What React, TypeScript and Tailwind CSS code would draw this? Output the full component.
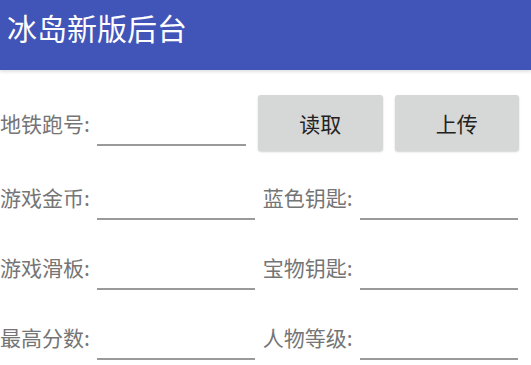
import React from "react";

const font = { fontFamily: '"Noto Sans CJK SC", "Noto Sans", sans-serif' };

function Field({ label, width, className = "" }: { label: string; width: string; className?: string }) {
  return (
    <div className={`flex items-center ${className}`}>
      <span className="text-[21px] leading-none text-[#757575] whitespace-nowrap">{label}</span>
      <div className={`ml-[7px] h-[46px] border-b-2 border-[#9a9a9a] ${width}`} />
    </div>
  );
}

function Button({ label, width }: { label: string; width: string }) {
  return (
    <button
      type="button"
      className={`flex h-[56px] items-center justify-center rounded-[3px] bg-[#d6d7d7] text-[21px] leading-none text-[#222] shadow-[0_1px_2px_rgba(0,0,0,0.18)] ${width}`}
    >
      {label}
    </button>
  );
}

export default function App() {
  return (
    <div className="h-[365px] w-[531px] overflow-hidden bg-white" style={font}>
      <header className="flex h-[70px] items-start bg-[#4154b8] px-[7px] pt-[12px] shadow-[0_2px_3px_rgba(0,0,0,0.12)]">
        <h1 className="text-[30px] leading-none text-white">冰岛新版后台</h1>
      </header>
      <main className="pt-[18px]">
        <div className="flex h-[70px] items-center">
          <Field label="地铁跑号:" width="w-[149px]" />
          <div className="ml-[12px] flex gap-[12px]">
            <Button label="读取" width="w-[125px]" />
            <Button label="上传" width="w-[124px]" />
          </div>
        </div>
        <div className="mt-[4px] flex h-[70px] items-center">
          <Field label="游戏金币:" width="w-[158px]" />
          <Field label="蓝色钥匙:" width="w-[158px]" className="ml-[8px]" />
        </div>
        <div className="flex h-[70px] items-center">
          <Field label="游戏滑板:" width="w-[158px]" />
          <Field label="宝物钥匙:" width="w-[158px]" className="ml-[8px]" />
        </div>
        <div className="flex h-[70px] items-center">
          <Field label="最高分数:" width="w-[158px]" />
          <Field label="人物等级:" width="w-[158px]" className="ml-[8px]" />
        </div>
      </main>
    </div>
  );
}
